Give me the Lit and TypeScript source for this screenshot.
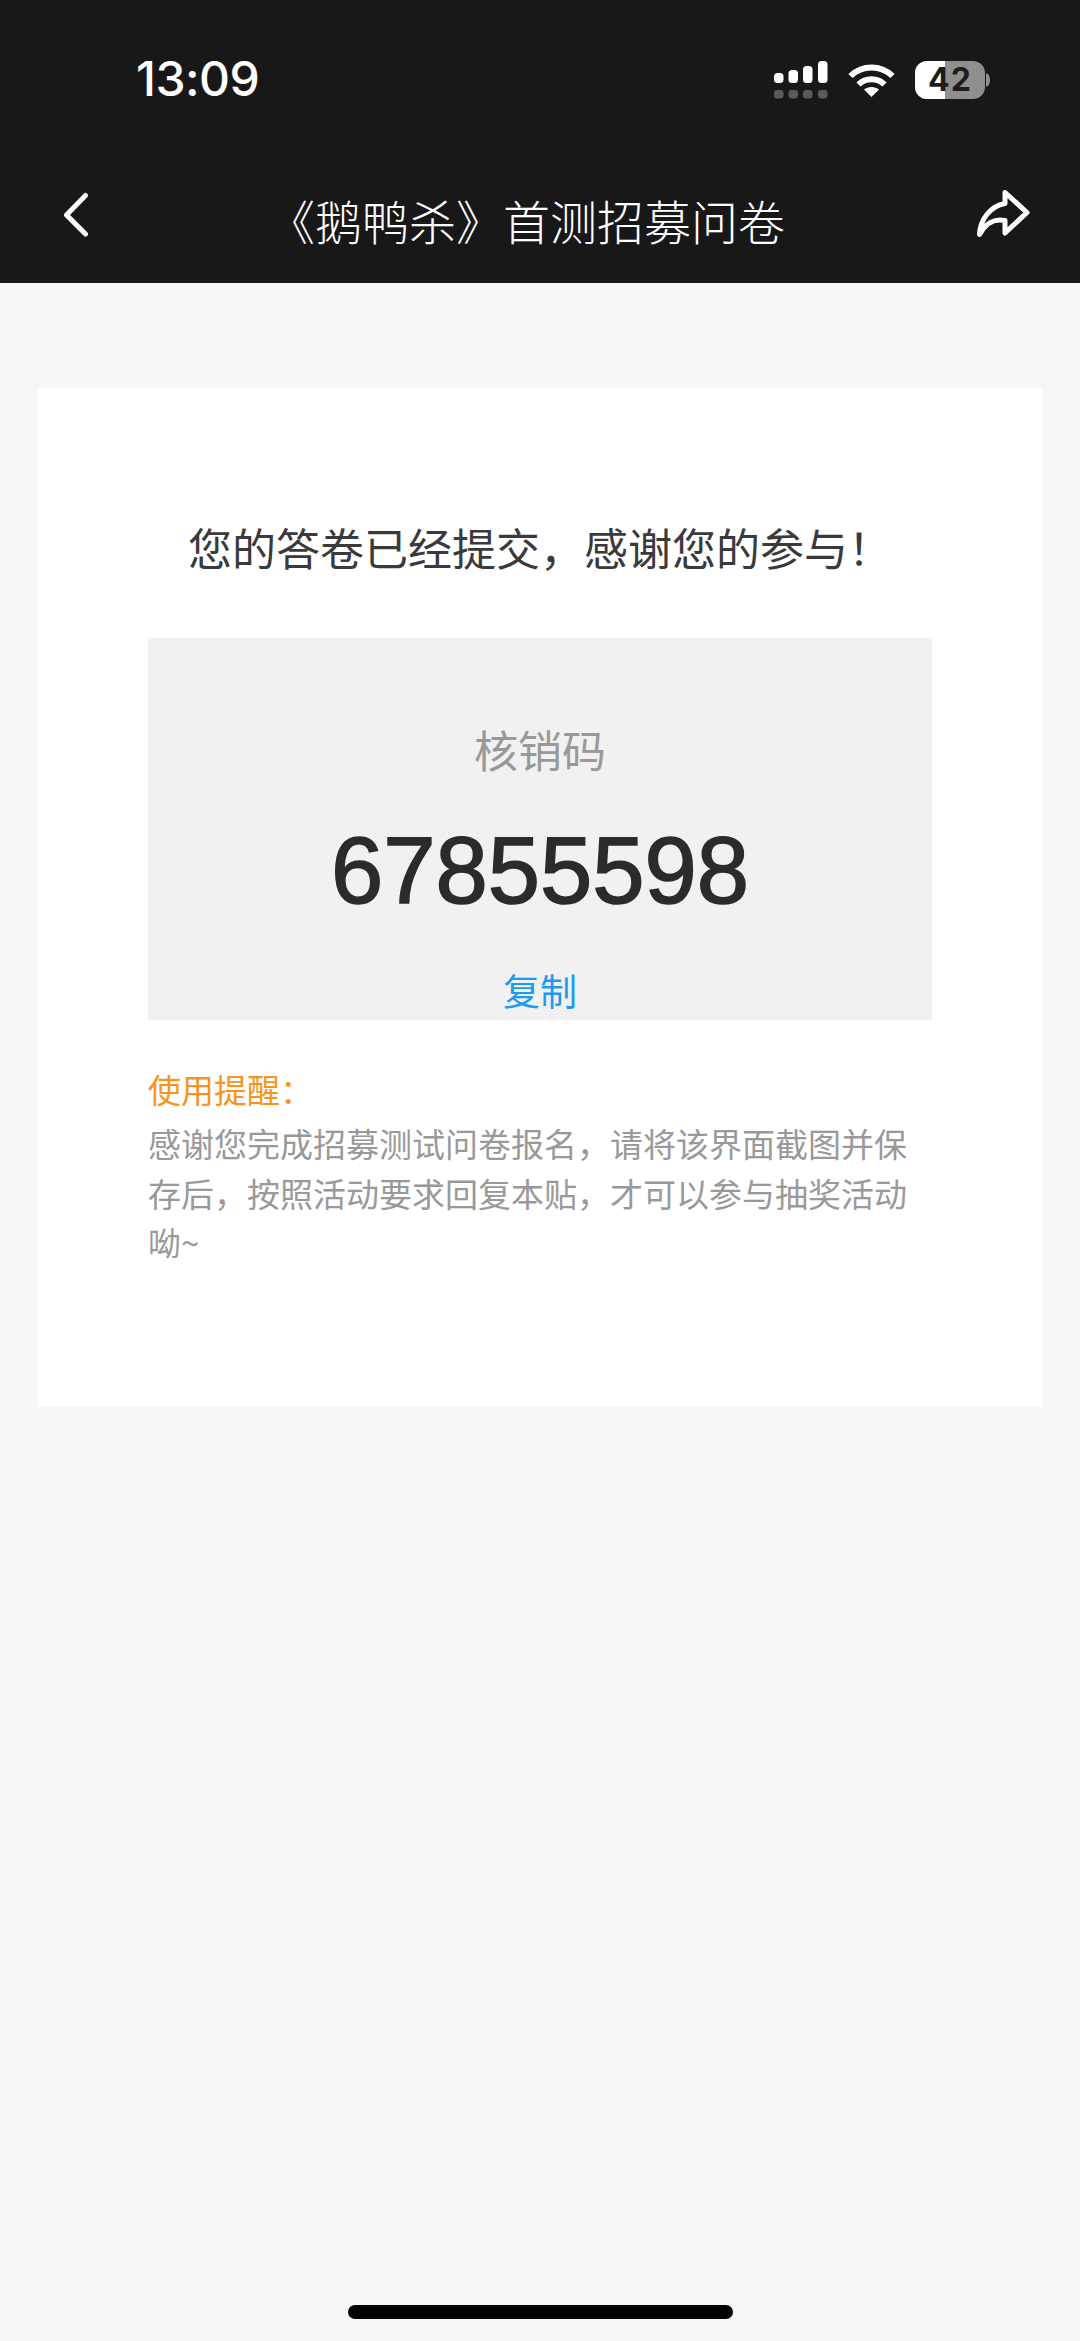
import { LitElement, html, css } from "lit";
import { customElement } from "lit/decorators.js";

@customElement("app-root")
export class AppRoot extends LitElement {
  static styles = css`
    :host { display: block; font-family: "Noto Sans CJK SC", "Liberation Sans", sans-serif; }
    .page { position: relative; min-height: 2341px; background: #f7f7f7; display: flex; flex-direction: column; }
    .head { height: 283px; background: #181818; color: #fff; display: flex; flex-direction: column; }
    .status { height: 160px; display: flex; align-items: flex-start; justify-content: space-between; padding: 51px 90px 0 136px; box-sizing: border-box; }
    .time { font: 500 48px/48px "Inter", "Liberation Sans", sans-serif; margin-top: 4px; letter-spacing: -0.5px; }
    .sys { display: flex; gap: 20px; align-items: flex-start; padding-top: 10px; }
    .sys svg { display: block; }
    .wifi { margin-top: 2px; }
    .battery { position: relative; width: 70px; height: 38px; border-radius: 12px; overflow: hidden; background: #8f8f8f; }
    .battery i { display: block; width: 30px; height: 38px; background: #fff; }
    .battery b { position: absolute; inset: 0; display: flex; align-items: center; justify-content: center; font: 700 32px/1 "Inter", "Liberation Sans", sans-serif; color: #1d1d1d; letter-spacing: 1px; }
    .batt-wrap { display: flex; align-items: center; gap: 1px; }
    .nav { flex: 1; display: flex; align-items: flex-start; padding: 30px 47px 0 61px; box-sizing: border-box; }
    .title { margin: -2px 0 0 179px; white-space: nowrap; font-size: 47px; line-height: 64px; color: #fff; font-weight: 300; }
    .share { margin: -2px 0 0 auto; }
    .card { margin: 105px 38px 0; height: 1019px; background: #fff; box-sizing: border-box; padding: 0 110px; display: flex; flex-direction: column; }
    .lead { margin-top: 127px; text-align: center; font-size: 44px; line-height: 64px; color: #3a3a3a; white-space: nowrap; }
    .box { margin-top: 59px; height: 382px; background: #f1f1f1; display: flex; flex-direction: column; align-items: center; }
    .label { margin-top: 81px; font-size: 44px; line-height: 60px; color: #999; }
    .num { margin-top: 37px; font: 400 94px/110px "Liberation Sans", sans-serif; color: #2b2b2b; -webkit-text-stroke: 1.6px #2b2b2b; }
    .copy { margin-top: 39px; font-size: 37px; line-height: 50px; color: #1e9af0; }
    .tip-h { margin-top: 45px; font-size: 33px; line-height: 48px; color: #f7941d; }
    .tip-b { margin-top: 6px; font-size: 33px; line-height: 49.5px; color: #999; }
    .home { position: absolute; left: 348px; bottom: 22px; width: 385px; height: 14px; border-radius: 7px; background: #000; }
  `;

  render() {
    return html`<div class="page">
      <div class="head">
        <div class="status">
          <div class="time">13:09</div>
          <div class="sys">
            <svg width="54" height="38" viewBox="0 0 54 38" fill="#fff">
              <rect x="0" y="12" width="9.5" height="10" rx="3.5"/>
              <rect x="14.5" y="9" width="9.5" height="13" rx="3.5"/>
              <rect x="29" y="5" width="9.5" height="17" rx="3.5"/>
              <rect x="44" y="0" width="9.5" height="22" rx="3.5"/>
              <g fill="#5a5a5a">
                <rect x="0" y="29" width="9.5" height="8.5" rx="3"/>
                <rect x="14.5" y="29" width="9.5" height="8.5" rx="3"/>
                <rect x="29" y="29" width="9.5" height="8.5" rx="3"/>
                <rect x="44" y="29" width="9.5" height="8.5" rx="3"/>
              </g>
            </svg>
            <svg class="wifi" width="47" height="36" viewBox="0 0 47 36" fill="none" stroke="#fff" stroke-width="6">
              <path d="M2.5 13 C14 1.5 33 1.5 44.5 13"/>
              <path d="M10.5 21.5 C17.5 14.5 29.5 14.5 36.5 21.5"/>
              <path d="M23.5 34 L16 26.5 C20 23 27 23 31 26.5 Z" fill="#fff" stroke="none"/>
            </svg>
            <div class="batt-wrap">
              <div class="battery"><i></i><b>42</b></div>
              <svg width="4" height="14" viewBox="0 0 4 14"><path d="M0 0 C3 1 4 4 4 7 C4 10 3 13 0 14 Z" fill="#8f8f8f"/></svg>
            </div>
          </div>
        </div>
        <div class="nav">
          <svg width="28" height="50" viewBox="0 0 28 50" fill="none" stroke="#fff" stroke-width="5" stroke-linecap="round" stroke-linejoin="round"><path d="M24.5 5.5 L5.5 25 L24.5 44"/></svg>
          <div class="title">《鹅鸭杀》首测招募问卷</div>
          <svg class="share" width="58" height="52" viewBox="0 0 58 52" fill="none" stroke="#fff" stroke-width="5" stroke-linecap="round" stroke-linejoin="round"><path d="M4.5 46.5 C5 32 15 18 30 15.5 L30 4.5 L52 24.5 L30 45 L30 32.5 C19 30 10 36 4.5 46.5 Z"/></svg>
        </div>
      </div>
      <div class="card">
        <div class="lead">您的答卷已经提交，感谢您的参与！</div>
        <div class="box">
          <div class="label">核销码</div>
          <div class="num">67855598</div>
          <div class="copy">复制</div>
        </div>
        <div class="tip-h">使用提醒：</div>
        <div class="tip-b">感谢您完成招募测试问卷报名，请将该界面截图并保存后，按照活动要求回复本贴，才可以参与抽奖活动呦~</div>
      </div>
      <div class="home"></div>
    </div>`;
  }
}
